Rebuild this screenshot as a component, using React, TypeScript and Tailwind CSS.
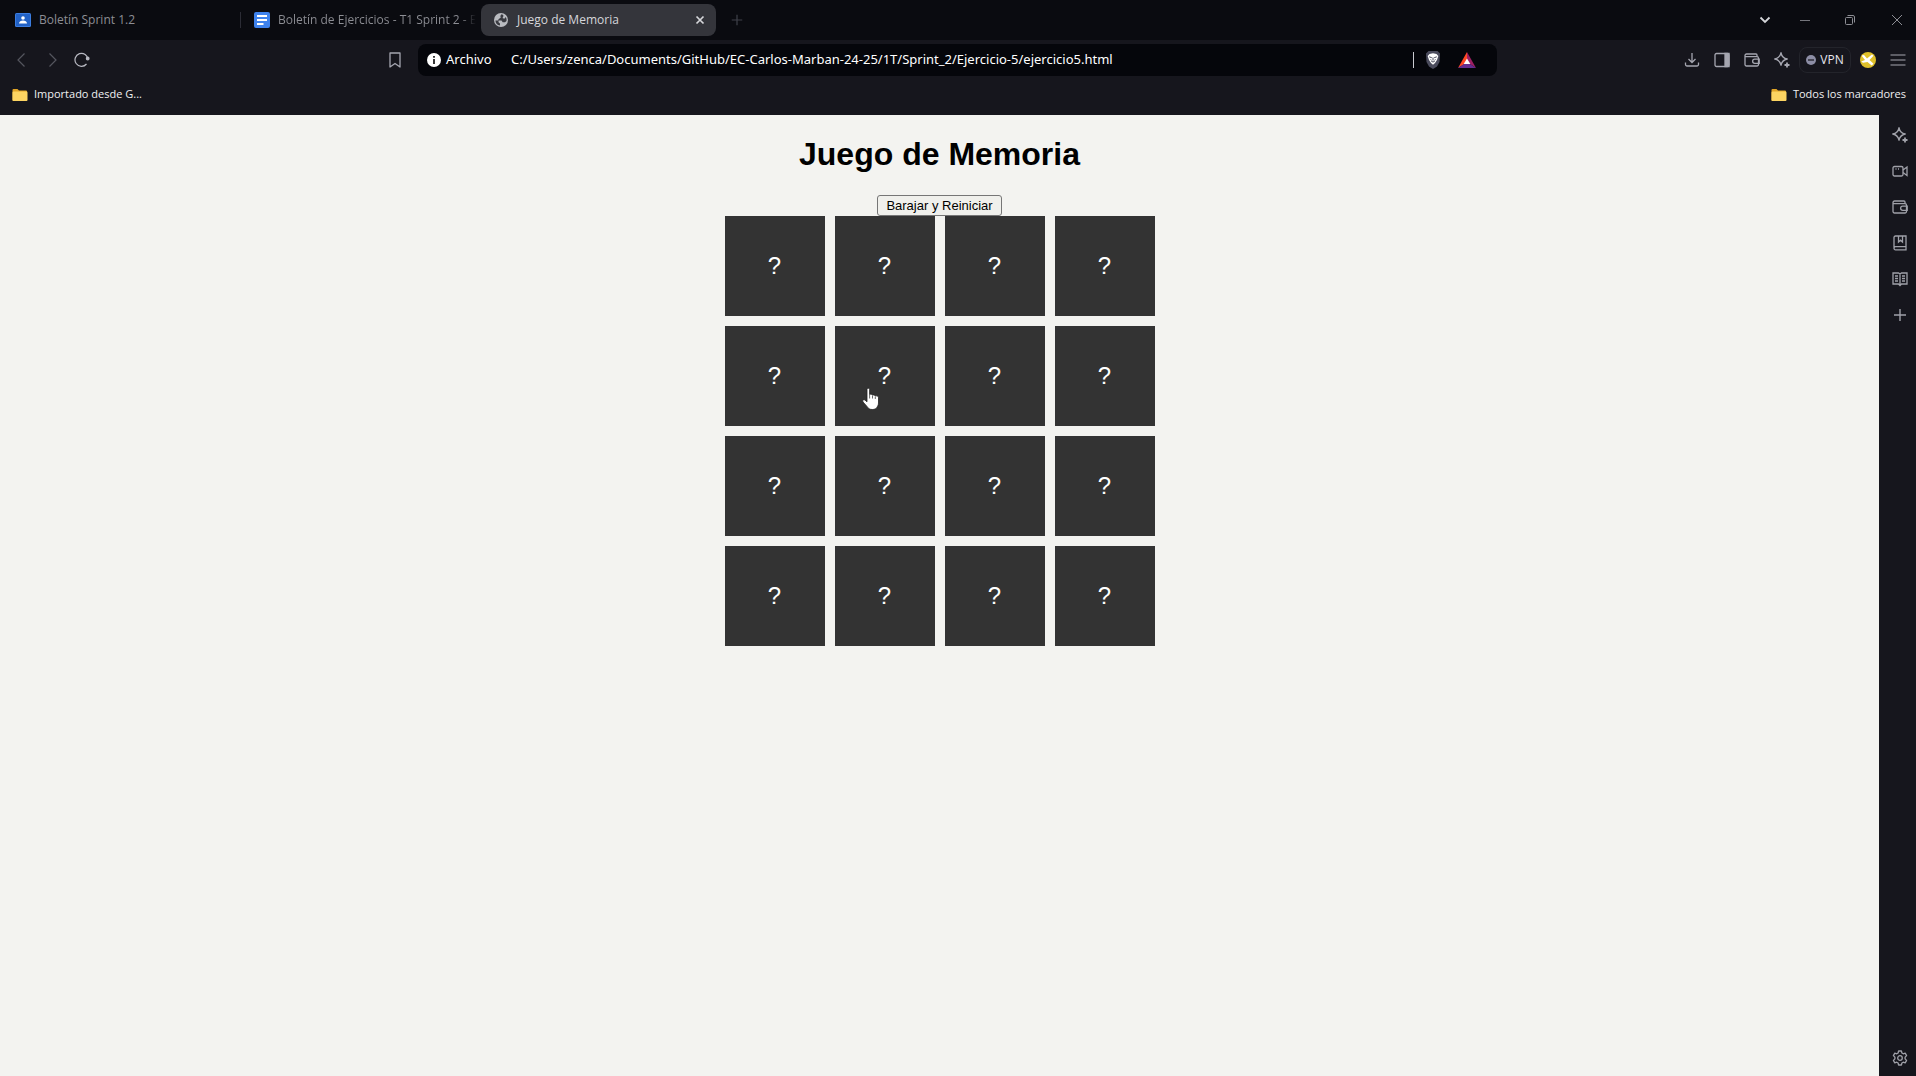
import type { ReactNode } from "react";
import { useState } from "react";

type IconProps = { children: ReactNode; size?: string; viewBox?: string; stroke?: string };

function Icon({ children, size = "size-4", viewBox = "0 0 16 16", stroke = "1" }: IconProps) {
  return (
    <svg className={`${size} shrink-0`} viewBox={viewBox} fill="none" stroke="currentColor" strokeWidth={stroke} aria-hidden="true">
      {children}
    </svg>
  );
}

const Sparkle = () => (
  <Icon stroke="1.400">
    <path d="M7 .8c.8 4 2.200 5.400 6.200 6.200C9.200 7.800 7.800 9.200 7 13.200 6.200 9.200 4.800 7.800.8 7 4.800 6.200 6.200 4.800 7 .8Z" strokeLinejoin="round" />
    <path d="M13 10.500v5M10.500 13h5" strokeWidth="1.800" />
  </Icon>
);

const Wallet = () => (
  <Icon stroke="1.3">
    <path d="M13 4.500V3a1 1 0 0 0-1-1H2.500A1.500 1.500 0 0 0 1 3.500M1 3.500A1.200 1.200 0 0 0 2.200 4.700H13a1.500 1.500 0 0 1 1.500 1.500v6.300A1.500 1.500 0 0 1 13 14H2.500A1.500 1.500 0 0 1 1 12.500Z" />
    <path d="M15.200 7.200h-4.500a2 2 0 0 0 0 4.100h4.500Z" />
  </Icon>
);

const Camera = () => (
  <Icon stroke="1.3">
    <rect x="1" y="3.500" width="10" height="9.500" rx="1.500" />
    <path d="M11 7l4-3v8.500l-4-3M3.500 6h1M6 6h1" />
  </Icon>
);

const SavedBook = () => (
  <Icon stroke="1.3">
    <path d="M2 12.800V2.500A1.500 1.500 0 0 1 3.500 1H14v13.800H3.500A1.500 1.500 0 0 1 2 13.200a1.500 1.500 0 0 1 1.500-1.500H14M6.500 1v6L8.500 5.200 10.500 7V1" />
  </Icon>
);

const OpenBook = () => (
  <Icon stroke="1.3">
    <path d="M1 2h5.500L8 3l1.500-1H15v11H9.500L8 14.500 6.500 13H1ZM8 3v11M3 5h3M3 7.500h3M3 10h3M10 5h3M10 7.500h3M10 10h3" />
  </Icon>
);

const Plus = ({ size = "size-4" }: { size?: string }) => (
  <Icon size={size} stroke="1.400">
    <path d="M8 2v12M2 8h12" />
  </Icon>
);

const Gear = () => (
  <Icon stroke="1.300">
    <path d="M6.600 1h2.800l.5 2 1.300.8 2-.6 1.400 2.400-1.500 1.500v1.800l1.500 1.500-1.400 2.400-2-.6-1.300.8-.5 2H6.600l-.5-2-1.300-.8-2 .6-1.400-2.400 1.500-1.500V7.100L1.400 5.600l1.400-2.400 2 .6L6.100 3Z" strokeLinejoin="round" />
    <circle cx="8" cy="8" r="2.300" />
  </Icon>
);

const Folder = () => (
  <svg className="size-4 shrink-0" viewBox="0 0 16 16" aria-hidden="true">
    <path d="M.5 3a1 1 0 0 1 1-1h4l1.500 1.500h7a1 1 0 0 1 1 1V13a1 1 0 0 1-1 1H1.500a1 1 0 0 1-1-1Z" fill="#e2a526" />
    <path d="M.5 5.500a1 1 0 0 1 1-1h13a1 1 0 0 1 1 1V13a1 1 0 0 1-1 1h-13a1 1 0 0 1-1-1Z" fill="#fcd462" />
  </svg>
);

const Globe = () => (
  <svg className="size-4 shrink-0" viewBox="0 0 16 16" aria-hidden="true">
    <circle cx="8" cy="8" r="7" fill="#b9bbc0" />
    <path d="M8.500 2.300 7.300 4l.5 1.600-2 1.300-1 1.500H2.400A5.700 5.700 0 0 0 7 13.600V11.500l-1.500-1.300V8.500h3l1.200 1.800H12l1.500-1.200A5.700 5.700 0 0 0 12.800 5l-1.500 1.700L9.500 6l.8-1.500V2.900Z" fill="#3a3b41" />
  </svg>
);

const Classroom = () => (
  <svg className="size-4 shrink-0" viewBox="0 0 16 16" aria-hidden="true">
    <rect y="1" width="16" height="14" rx="1.500" fill="#3b7de0" />
    <rect x="1" y="2" width="14" height="12" fill="#2262c6" />
    <circle cx="8" cy="6" r="1.800" fill="#fff" />
    <path d="M4 11.500c0-2 2-3 4-3s4 1 4 3Z" fill="#fff" />
  </svg>
);

const Docs = () => (
  <svg className="size-4 shrink-0" viewBox="0 0 16 16" aria-hidden="true">
    <rect width="16" height="16" rx="2" fill="#3f83ee" />
    <path d="M3 4h10M3 8h10M3 12h6.500" stroke="#fff" strokeWidth="1.800" />
  </svg>
);

const Shield = () => (
  <svg className="h-[18px] w-4 shrink-0" viewBox="0 0 16 18" aria-hidden="true">
    <path d="M3.500 0h9L15 2.500 14.500 11 12 15.500 8 18l-4-2.500L1.500 11 1 2.500Z" fill="#4a4b5c" />
    <path d="M4.500 3 8 2.200l3.500.8 1.800 2-1.300 4-2 3L8 13.800 6 12 4 9 2.700 5Z" fill="#fff" />
    <path d="M4.200 5.800l2.600.9M11.800 5.800l-2.600.9M8 6.500v3M6.300 10.300 8 11l1.700-.7M5.500 8.500l1 .7M10.500 8.500l-1 .7" stroke="#4a4b5c" strokeWidth="1" fill="none" />
  </svg>
);

const Bat = () => (
  <svg className="h-4 w-[18px] shrink-0" viewBox="0 0 18 16" aria-hidden="true">
    <path d="M9 0 0 16 9 10.500Z" fill="#ff4724" />
    <path d="M9 0v10L18 16Z" fill="#9e1f63" />
    <path d="M0 16 9 10l9 6Z" fill="#662d91" />
    <path d="M9 6.500 12.300 12H5.700Z" fill="#fff" />
  </svg>
);

const HandPointer = () => (
  <svg className="pointer-events-none absolute top-[61px] left-[27px] h-6 w-[18px]" viewBox="0 0 18 24" aria-hidden="true">
    <path
      d="M5 2.500a1.300 1.300 0 0 1 2.600 0v5c1-.7 2.600-.3 2.900.6 1-.4 2.400 0 2.700.8 1.400-.3 3.300.2 3.300 1.800V16c0 2-1 3.200-1.500 4.300-.7 1.500-2.500 2.200-4.800 2.200-2.500 0-4-1-5-2.800L1 15c-1-2 .6-2.900 2-2l2 1.800Z"
      fill="#fff"
      stroke="#222"
      strokeWidth=".8"
    />
    <path d="M7.600 7.500v4M10.500 8.500v3M13.300 9.500v2.500" stroke="#444" strokeWidth=".8" />
  </svg>
);

function IconButton({ label, children, className = "" }: { label: string; children: ReactNode; className?: string }) {
  return (
    <button type="button" aria-label={label} className={`flex shrink-0 items-center justify-center ${className}`}>
      {children}
    </button>
  );
}

function TabStrip() {
  return (
    <header className="flex h-10 items-center bg-[#0a0b10] text-[#8d8e94]">
      <button type="button" className="flex h-8 w-60 shrink-0 items-center gap-2 pl-[15px] text-left">
        <Classroom />
        <span>Boletín Sprint 1.2</span>
      </button>
      <button type="button" className="flex h-4 w-[241px] shrink-0 items-center gap-2 border-l border-[#2b2c35] pl-[13px] text-left">
        <Docs />
        <span className="bg-linear-to-r from-[#8d8e94] from-92% to-transparent bg-clip-text whitespace-nowrap text-transparent">
          Boletín de Ejercicios - T1 Sprint 2 - E
        </span>
      </button>
      <div className="flex h-8 w-[235px] shrink-0 items-center rounded-lg bg-[#34353b] pr-2 pl-3 text-[#d5d6da]">
        <button type="button" className="flex flex-1 items-center gap-2 text-left">
          <Globe />
          <span>Juego de Memoria</span>
        </button>
        <IconButton label="Cerrar pestaña" className="size-4">
          <Icon stroke="1.700">
            <path d="M4.500 4.500l7 7M11.500 4.500l-7 7" />
          </Icon>
        </IconButton>
      </div>
      <IconButton label="Nueva pestaña" className="w-[41px] text-[#3f4048]">
        <Plus size="size-[14px]" />
      </IconButton>
      <div className="flex-1" />
      <IconButton label="Buscar pestañas" className="w-[46px] text-[#d5d6da]">
        <Icon stroke="1.800">
          <path d="M3.500 5.500 8 10l4.500-4.500" />
        </Icon>
      </IconButton>
      <IconButton label="Minimizar" className="w-[34px] text-[#75767c]">
        <Icon>
          <path d="M3 8.500h10" />
        </Icon>
      </IconButton>
      <IconButton label="Restaurar" className="w-14 text-[#8d8e94]">
        <Icon>
          <rect x="3.500" y="5.500" width="7" height="7" rx="1" />
          <path d="M5.500 3.500h5.500a1.500 1.500 0 0 1 1.500 1.500v5.500" />
        </Icon>
      </IconButton>
      <IconButton label="Cerrar" className="w-[38px] text-[#8d8e94]">
        <Icon>
          <path d="M3 3l10 10M13 3 3 13" />
        </Icon>
      </IconButton>
    </header>
  );
}

function Toolbar() {
  return (
    <div className="flex h-10 items-center text-[#a5a6b0]">
      <IconButton label="Atrás" className="ml-[7px] w-[30px] text-[#55565f]">
        <Icon stroke="1.200">
          <path d="M10.500 1.500 4 8l6.500 6.500" />
        </Icon>
      </IconButton>
      <IconButton label="Adelante" className="w-[30px] text-[#55565f]">
        <Icon stroke="1.200">
          <path d="M5.500 1.500 12 8l-6.500 6.500" />
        </Icon>
      </IconButton>
      <IconButton label="Recargar" className="w-[30px] text-[#b8b9c2]">
        <Icon stroke="1.200">
          <path d="M14 7.500A6.500 6.500 0 1 0 12.500 12" />
          <circle cx="13.700" cy="6.500" r="1.300" fill="currentColor" />
        </Icon>
      </IconButton>
      <div className="flex-29" />
      <IconButton label="Añadir marcador" className="mr-[15px] w-4">
        <Icon stroke="1.300">
          <path d="M3 1h10v14l-5-3.500L3 15Z" strokeLinejoin="round" />
        </Icon>
      </IconButton>
      <div className="flex h-8 min-w-0 flex-105 items-center rounded-lg bg-[#05060b] pr-[21px] pl-2 font-['Noto_Sans','Open_Sans',sans-serif] text-[13px] text-white">
        <svg className="size-4 shrink-0" viewBox="0 0 16 16" aria-hidden="true">
          <circle cx="8" cy="8" r="7" fill="#fff" />
          <path d="M8 7v5M8 4v1.800" stroke="#222" strokeWidth="1.800" />
        </svg>
        <label htmlFor="address" className="ml-1 w-[65px] shrink-0">
          Archivo
        </label>
        <input
          id="address"
          className="min-w-0 flex-1 bg-transparent outline-none"
          defaultValue="C:/Users/zenca/Documents/GitHub/EC-Carlos-Marban-24-25/1T/Sprint_2/Ejercicio-5/ejercicio5.html"
        />
        <span className="mr-[11px] h-4 w-px bg-[#c9cad0]" />
        <IconButton label="Brave Shields" className="mr-[17px]">
          <Shield />
        </IconButton>
        <IconButton label="Brave Rewards">
          <Bat />
        </IconButton>
      </div>
      <div className="flex-18" />
      <IconButton label="Descargas" className="w-[30px]">
        <Icon stroke="1.300">
          <path d="M8 1v9M4.500 7 8 10.500 11.500 7M1.500 10.500v2A1.500 1.500 0 0 0 3 14h10a1.500 1.500 0 0 0 1.500-1.500v-2" />
        </Icon>
      </IconButton>
      <IconButton label="Panel lateral" className="w-[30px]">
        <Icon stroke="1.300">
          <rect x="1" y="1.500" width="14" height="13" rx="1.500" />
          <path d="M11 1.500h4v13h-4Z" fill="currentColor" />
        </Icon>
      </IconButton>
      <IconButton label="Cartera" className="w-[30px]">
        <Wallet />
      </IconButton>
      <IconButton label="Leo" className="w-[30px]">
        <Sparkle />
      </IconButton>
      <button type="button" className="ml-0.5 flex h-[26px] w-[52px] shrink-0 items-center justify-center gap-1 rounded-lg border border-[#23242b] text-xs text-[#e6e6ee]">
        <svg className="size-[10px]" viewBox="0 0 10 10" aria-hidden="true">
          <circle cx="5" cy="5" r="5" fill="#8d8ea6" />
          <path d="M2 5h6" stroke="#16161d" strokeWidth="1.200" />
        </svg>
        VPN
      </button>
      <IconButton label="Perfil" className="w-[34px]">
        <svg className="size-4" viewBox="0 0 16 16" aria-hidden="true">
          <circle cx="8" cy="8" r="8" fill="#dfc02a" />
          <path d="M1.500 3.500 4 3l3 3.500L12 2.500l1.500 1.200L9.500 8l4 3.800-1.800 1.700L7.500 10 3 10.800 1.200 9.500 5 8Z" fill="#fff" />
        </svg>
      </IconButton>
      <IconButton label="Menú" className="mr-[5px] w-[26px]">
        <Icon stroke="1.200">
          <path d="M.5 3h15M.5 8h15M.5 13h15" />
        </Icon>
      </IconButton>
    </div>
  );
}

function BookmarksBar() {
  return (
    <nav aria-label="Marcadores" className="flex h-[35px] items-center justify-between pr-[10px] pb-1.5 pl-3 text-[11px] text-[#f0f0f2]">
      <a href="#importado" className="flex items-center gap-1.5">
        <Folder />
        Importado desde G...
      </a>
      <a href="#marcadores" className="flex items-center gap-1.5">
        <Folder />
        Todos los marcadores
      </a>
    </nav>
  );
}

function Sidebar() {
  return (
    <aside className="flex w-[37px] shrink-0 flex-col items-center gap-5 pt-3 pb-[10px] pl-1 text-[#a0a1a9]">
      <IconButton label="Leo AI">
        <Sparkle />
      </IconButton>
      <IconButton label="Brave Talk">
        <Camera />
      </IconButton>
      <IconButton label="Wallet">
        <Wallet />
      </IconButton>
      <IconButton label="Marcadores guardados">
        <SavedBook />
      </IconButton>
      <IconButton label="Lista de lectura">
        <OpenBook />
      </IconButton>
      <IconButton label="Añadir">
        <Plus />
      </IconButton>
      <IconButton label="Configuración" className="mt-auto">
        <Gear />
      </IconButton>
    </aside>
  );
}

const CARDS = Array.from({ length: 16 }, (_, index) => index);
const HOVERED_CARD = 5;

function MemoryGame() {
  const [round, setRound] = useState(0);
  return (
    <main className="flex flex-1 flex-col items-center bg-[#f3f3f0] pt-[21px] font-['Liberation_Sans',Arial,sans-serif] text-black">
      <h1 className="text-[32px] leading-[37px] font-bold">Juego de Memoria</h1>
      <button
        type="button"
        onClick={() => setRound(round + 1)}
        className="mt-[22px] h-[21px] rounded-[3px] border border-[#767676] bg-[#f0f0ec] px-2 text-[13px] leading-none"
      >
        Barajar y Reiniciar
      </button>
      <div key={round} className="grid grid-cols-4 gap-[10px]">
        {CARDS.map((card) => (
          <button type="button" key={card} className="relative flex size-[100px] cursor-pointer items-center justify-center bg-[#333333] text-2xl text-white">
            ?
            {card === HOVERED_CARD && <HandPointer />}
          </button>
        ))}
      </div>
    </main>
  );
}

export default function App() {
  return (
    <div className="flex min-h-screen flex-col bg-[#16161d] font-['Open_Sans','Noto_Sans',sans-serif] text-xs">
      <TabStrip />
      <Toolbar />
      <BookmarksBar />
      <div className="flex flex-1">
        <MemoryGame />
        <Sidebar />
      </div>
    </div>
  );
}
